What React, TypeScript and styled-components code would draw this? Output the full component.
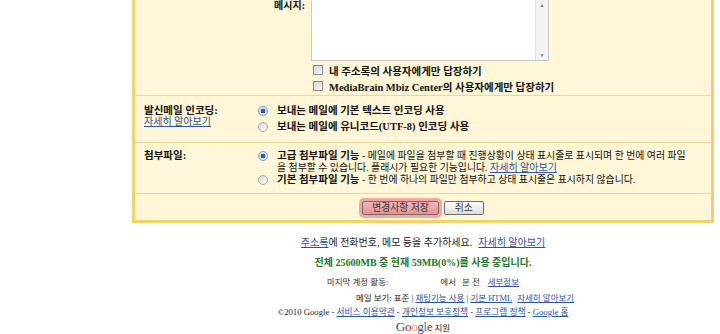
import styled, { createGlobalStyle } from "styled-components";

const GlobalStyle = createGlobalStyle`
  body {
    margin: 0;
    background: #fff;
    font-family: "Liberation Serif", "Noto Sans CJK KR", serif;
    color: #111;
  }
`;

// 전체 래퍼 (설정 패널 + 하단 푸터)
const Page = styled.div`
  width: 582px;
  margin-left: 132px;
`;

// 노란 설정 패널
const Panel = styled.div`
  background: #fff7d7;
  border: 3px solid #f5cf68;
  border-top: 0;
`;

// 패널 안의 한 구역, 아래에 구분선
const Section = styled.div<{ $pad: string }>`
  border-bottom: 1px solid #f1d88e;
  padding: ${(p) => p.$pad};
`;

// 메시지 행
const MessageGrid = styled.div`
  display: grid;
  grid-template-columns: 170px 238px;
  column-gap: 6px;
`;

const RightLabel = styled.div`
  text-align: right;
  font-size: 10px;
  font-weight: bold;
  line-height: 12px;
`;

const TextBox = styled.div`
  position: relative;
  height: 61px;
  background: #fff;
  border: 1px solid #c9c9c9;
  border-top: 0;
  box-sizing: border-box;
`;

const ScrollBar = styled.div`
  position: absolute;
  right: 0;
  top: 0;
  bottom: 0;
  width: 13px;
  background: #f3f3f3;
  border-left: 1px solid #e2e2e2;
  display: flex;
  flex-direction: column;
  justify-content: space-between;
  align-items: center;
  font-size: 5px;
  color: #777;
  padding: 3px 0 2px;
  box-sizing: border-box;
`;

const CheckList = styled.div`
  grid-column: 2;
  padding: 1px 0 0 2px;
`;

const CheckRow = styled.div`
  display: flex;
  align-items: center;
  gap: 6px;
  height: 16px;
  font-size: 10.5px;
  font-weight: bold;
  white-space: nowrap;
`;

const CheckBox = styled.span`
  width: 10px;
  height: 10px;
  box-sizing: border-box;
  border: 1px solid #8c8c8c;
  background: linear-gradient(135deg, #d4d4d4, #fafafa);
  flex: none;
`;

// 설정 행 (라벨 + 옵션)
const SettingGrid = styled.div`
  display: grid;
  grid-template-columns: 123px 1fr;
`;

const Label = styled.div`
  padding-left: 9px;
  font-size: 10.5px;
  line-height: 11px;
  font-weight: bold;
  white-space: nowrap;
`;

const Link = styled.a`
  color: #2b52a3;
  text-decoration: underline;
  font-weight: normal;
  font-size: 10px;
`;

const Options = styled.div<{ $gap: number }>`
  display: flex;
  flex-direction: column;
  gap: ${(p) => p.$gap}px;
`;

const Option = styled.div`
  display: flex;
  align-items: flex-start;
  gap: 9px;
  line-height: 12px;
  font-size: 9.9px;
  white-space: nowrap;
`;

const Radio = styled.span<{ $on?: boolean }>`
  flex: none;
  width: 10px;
  height: 10px;
  margin-top: 1px;
  border-radius: 50%;
  box-sizing: border-box;
  border: 1px solid ${(p) => (p.$on ? "#7f9cc8" : "#a8a8a8")};
  background: ${(p) =>
    p.$on
      ? "radial-gradient(circle, #2a5bc4 0 2.2px, #dfe8f6 2.6px)"
      : "linear-gradient(135deg, #d8d8d8, #fbfbfb)"};
`;

const Strong = styled.b`
  font-size: 10.5px;
`;

const ButtonRow = styled.div`
  display: flex;
  justify-content: center;
  gap: 5px;
  padding: 7px 0 5px;
`;

const Button = styled.button<{ $primary?: boolean }>`
  height: 14px;
  padding: 0 ${(p) => (p.$primary ? 9 : 10)}px;
  font-family: inherit;
  font-size: 9.8px;
  line-height: 12px;
  color: #333;
  border: 1px solid #6e6e6e;
  border-radius: 2px;
  background: ${(p) =>
    p.$primary
      ? "linear-gradient(#f1b7b9, #e09298)"
      : "linear-gradient(#fafafa, #dedede)"};
  box-shadow: ${(p) => (p.$primary ? "0 0 0 3px #f4a79d" : "none")};
`;

// 하단 안내문
const Footer = styled.div`
  text-align: center;
  padding-top: 13px;
`;

const FootLine = styled.div<{ $size: number; $h: number; $shift?: number }>`
  font-size: ${(p) => p.$size}px;
  line-height: ${(p) => p.$h}px;
  padding-left: ${(p) => p.$shift ?? 0}px;
  color: #222;
  white-space: nowrap;
`;

const Green = styled.b`
  color: #24742c;
`;

const Gray = styled.span`
  color: #333;
`;

const Gap = styled.span<{ $w: number }>`
  display: inline-block;
  width: ${(p) => p.$w}px;
`;

const FootLink = styled.a`
  color: #2b52a3;
  text-decoration: underline;
`;

const Logo = styled.span`
  font-family: "Liberation Serif", serif;
  font-size: 13px;
  letter-spacing: -0.3px;
`;

const L = styled.span<{ $c: string }>`
  color: ${(p) => p.$c};
`;

export default function App() {
  return (
    <>
      <GlobalStyle />
      <Page>
        <Panel>
          <Section $pad="0 0 1px 0">
            <MessageGrid>
              <RightLabel>메시지:</RightLabel>
              <TextBox>
                <ScrollBar>
                  <span>▲</span>
                  <span>▼</span>
                </ScrollBar>
              </TextBox>
              <CheckList>
                <CheckRow>
                  <CheckBox />내 주소록의 사용자에게만 답장하기
                </CheckRow>
                <CheckRow>
                  <CheckBox />MediaBrain Mbiz Center의 사용자에게만 답장하기
                </CheckRow>
              </CheckList>
            </MessageGrid>
          </Section>

          <Section $pad="9px 0 9px 0">
            <SettingGrid>
              <Label>
                발신메일 인코딩:
                <br />
                <Link href="#">자세히 알아보기</Link>
              </Label>
              <Options $gap={4}>
                <Option>
                  <Radio $on />
                  <Strong>보내는 메일에 기본 텍스트 인코딩 사용</Strong>
                </Option>
                <Option>
                  <Radio />
                  <Strong>보내는 메일에 유니코드(UTF-8) 인코딩 사용</Strong>
                </Option>
              </Options>
            </SettingGrid>
          </Section>

          <Section $pad="7px 0 7px 0">
            <SettingGrid>
              <Label>첨부파일:</Label>
              <Options $gap={0}>
                <Option>
                  <Radio $on />
                  <span>
                    <Strong>고급 첨부파일 기능</Strong> - 메일에 파일을 첨부할 때 진행상황이 상태 표시줄로 표시되며 한 번에 여러 파일
                    <br />을 첨부할 수 있습니다. 플래시가 필요한 기능입니다.{" "}
                    <Link href="#">자세히 알아보기</Link>
                  </span>
                </Option>
                <Option>
                  <Radio />
                  <span>
                    <Strong>기본 첨부파일 기능</Strong> - 한 번에 하나의 파일만 첨부하고 상태 표시줄은 표시하지 않습니다.
                  </span>
                </Option>
              </Options>
            </SettingGrid>
          </Section>

          <ButtonRow>
            <Button $primary>변경사항 저장</Button>
            <Button>취소</Button>
          </ButtonRow>
        </Panel>

        <Footer>
          <FootLine $size={10} $h={14}>
            <FootLink href="#">주소록</FootLink>에 전화번호, 메모 등을 추가하세요.
            <Gap $w={6} />
            <FootLink href="#">자세히 알아보기</FootLink>
          </FootLine>
          <FootLine $size={10} $h={20} style={{ marginTop: 3 }}>
            <Green>전체 25600MB 중 현재 59MB(0%)를 사용 중입니다.</Green>
          </FootLine>
          <FootLine $size={8.5} $h={18}>
            <Gray>
              마지막 계정 활동:
              <Gap $w={52} />
              에서
              <Gap $w={6} />분 전
              <Gap $w={8} />
            </Gray>
            <FootLink href="#">세부정보</FootLink>
          </FootLine>
          <FootLine $size={8.5} $h={14} $shift={84}>
            메일 보기: 표준 | <FootLink href="#">채팅기능 사용</FootLink> |{" "}
            <FootLink href="#">기본 HTML</FootLink>
            <Gap $w={5} />
            <FootLink href="#">자세히 알아보기</FootLink>
          </FootLine>
          <FootLine $size={8.7} $h={15}>
            ©2010 Google - <FootLink href="#">서비스 이용약관</FootLink> -{" "}
            <FootLink href="#">개인정보 보호정책</FootLink> -{" "}
            <FootLink href="#">프로그램 정책</FootLink> -{" "}
            <FootLink href="#">Google 홈</FootLink>
          </FootLine>
          <FootLine $size={8.5} $h={14}>
            <Logo>
              <L $c="#1a4fc6">G</L>
              <L $c="#c8181b">o</L>
              <L $c="#e3a60c">o</L>
              <L $c="#1a4fc6">g</L>
              <L $c="#2c9a32">l</L>
              <L $c="#c8181b">e</L>
            </Logo>{" "}
            지원
          </FootLine>
        </Footer>
      </Page>
    </>
  );
}
